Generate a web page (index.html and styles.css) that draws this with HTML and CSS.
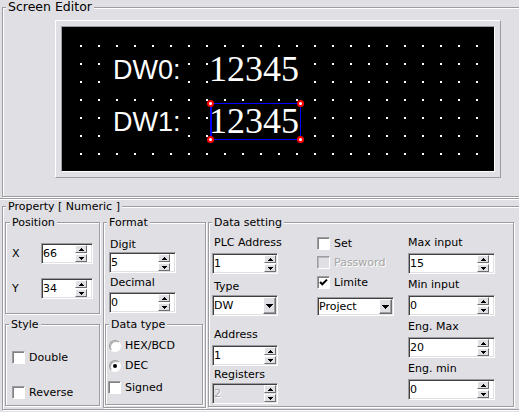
FILE: index.html
```html
<!DOCTYPE html>
<html>
<head>
<meta charset="utf-8">
<title>Screen Editor</title>
<link rel="stylesheet" href="styles.css">
</head>
<body>
<div class="group screen">
  <span class="gtitle gt-lg">Screen Editor</span>
  <div class="lcd-frame">
    <div class="lcd-well">
      <div class="lcd">
        <svg class="dots" width="432" height="144" viewBox="0 0 432 144">
          <defs>
            <pattern id="dp" width="18" height="18" patternUnits="userSpaceOnUse">
              <rect width="2" height="2" fill="#fff"/>
            </pattern>
          </defs>
          <rect x="18" y="18" width="414" height="126" fill="url(#dp)"/>
        </svg>
        <span class="tag t0">DW0:</span>
        <span class="num n0">12345</span>
        <span class="tag t1">DW1:</span>
        <span class="num n1">12345</span>
        <div class="sel">
          <i class="hd h-tl"></i><i class="hd h-tr"></i><i class="hd h-bl"></i><i class="hd h-br"></i>
        </div>
      </div>
    </div>
  </div>
</div>
<div class="splitter"></div>
<div class="group prop">
  <span class="gtitle">Property [ Numeric ]</span>
  <div class="prop-body">
    <div class="col1">
      <div class="group pos">
        <span class="gtitle gt-pos">Position</span>
        <div class="xy-row">
          <span class="xy-lbl">X</span>
          <div class="spin w52"><span class="val">66</span><span class="sbtns"><i class="sb up"></i><i class="sb dn"></i></span></div>
        </div>
        <div class="xy-row mt14">
          <span class="xy-lbl">Y</span>
          <div class="spin w52"><span class="val">34</span><span class="sbtns"><i class="sb up"></i><i class="sb dn"></i></span></div>
        </div>
      </div>
      <div class="group style">
        <span class="gtitle">Style</span>
        <div class="opt"><span class="cb"></span><span>Double</span></div>
        <div class="opt mt22"><span class="cb"></span><span>Reverse</span></div>
      </div>
    </div>
    <div class="group format">
      <span class="gtitle">Format</span>
      <div class="lbl fl">Digit</div>
      <div class="spin w67 fsp mt1"><span class="val">5</span><span class="sbtns"><i class="sb up"></i><i class="sb dn"></i></span></div>
      <div class="lbl fl mt3">Decimal</div>
      <div class="spin w67 fsp mt3"><span class="val">0</span><span class="sbtns"><i class="sb up"></i><i class="sb dn"></i></span></div>
      <div class="group dtype">
        <span class="gtitle">Data type</span>
        <div class="opt"><span class="rb"></span><span>HEX/BCD</span></div>
        <div class="opt mt7"><span class="rb on"></span><span>DEC</span></div>
        <div class="opt mt9"><span class="cb"></span><span>Signed</span></div>
      </div>
    </div>
    <div class="group dataset">
      <span class="gtitle">Data setting</span>
      <div class="ds-body">
        <div class="ds-left">
          <div class="lbl dl">PLC Address</div>
          <div class="spin w66 flush mt4"><span class="val">1</span><span class="sbtns"><i class="sb up"></i><i class="sb dn"></i></span></div>
          <div class="lbl dl mt6">Type</div>
          <div class="combo w66 mt2"><span class="val">DW</span><span class="cbtn"><i class="darr"></i></span></div>
          <div class="lbl dl mt12">Address</div>
          <div class="spin w66 flush mt4"><span class="val">1</span><span class="sbtns"><i class="sb up"></i><i class="sb dn"></i></span></div>
          <div class="lbl dl mt2">Registers</div>
          <div class="spin w66 flush dis mt2"><span class="val">2</span><span class="sbtns"><i class="sb up"></i><i class="sb dn"></i></span></div>
        </div>
        <div class="ds-mid">
          <div class="opt"><span class="cb"></span><span>Set</span></div>
          <div class="opt dis mt6"><span class="cb off"></span><span>Password</span></div>
          <div class="opt mt7"><span class="cb"><svg width="11" height="11" viewBox="0 0 11 11"><polyline points="2,5 4.3,7.3 9,2.6" fill="none" stroke="#000" stroke-width="2"/></svg></span><span>Limite</span></div>
          <div class="combo w77 small mt8"><span class="val">Project</span><span class="cbtn"><i class="darr"></i></span></div>
        </div>
        <div class="ds-right">
          <div class="lbl">Max input</div>
          <div class="spin w87 mt4"><span class="val">15</span><span class="sbtns"><i class="sb up"></i><i class="sb dn"></i></span></div>
          <div class="lbl mt4">Min input</div>
          <div class="spin w87 mt4"><span class="val">0</span><span class="sbtns"><i class="sb up"></i><i class="sb dn"></i></span></div>
          <div class="lbl mt4">Eng. Max</div>
          <div class="spin w87 mt4"><span class="val">20</span><span class="sbtns"><i class="sb up"></i><i class="sb dn"></i></span></div>
          <div class="lbl mt4">Eng. min</div>
          <div class="spin w87 mt4"><span class="val">0</span><span class="sbtns"><i class="sb up"></i><i class="sb dn"></i></span></div>
        </div>
      </div>
    </div>
  </div>
</div>
</body>
</html>
```

FILE: styles.css
```css
* { box-sizing: border-box; }
html, body { margin: 0; overflow: hidden; }
body {
  width: 519px;
  height: 412px;
  background: #e0dfe3;
  font-family: "DejaVu Sans", "Noto Sans", sans-serif;
  font-size: 11px;
  line-height: 13px;
  color: #000;
}

/* group boxes */
.group {
  position: relative;
  border: 1px solid #9d9da1;
  box-shadow: inset 1px 1px #fff, 1px 1px #fff;
}
.gtitle {
  position: absolute;
  top: -7px;
  left: 3px;
  padding: 0 2px;
  background: #e0dfe3;
  white-space: nowrap;
}
.gt-lg { font-size: 12.5px; line-height: 14px; top: -8px; left: 3px; }
.gt-pos { left: 4px; }

/* screen editor */
.screen {
  margin: 7px 0 0 2px;
  width: 530px;
  height: 190px;
  padding: 12px 0 0 52px;
}
.lcd-frame {
  width: 446px;
  height: 158px;
  border: 1px solid;
  border-color: #fff #9d9da1 #9d9da1 #fff;
  padding: 5px;
}
.lcd-well {
  width: 434px;
  height: 146px;
  border: 1px solid;
  border-color: #9d9da1 #fff #fff #9d9da1;
}
.lcd {
  position: relative;
  width: 432px;
  height: 144px;
  background: #000;
  overflow: hidden;
}
.dots { display: block; }
.tag {
  position: absolute;
  left: 51px;
  font-family: "Liberation Sans", Arial, sans-serif;
  font-size: 27px;
  line-height: 37px;
  color: #fff;
  background: #000;
}
.t0 { top: 25px; }
.t1 { top: 77px; }
.num {
  position: absolute;
  left: 147px;
  font-family: "Liberation Serif", "DejaVu Serif", "Times New Roman", serif;
  font-size: 36px;
  line-height: 37px;
  color: #fff;
  background: #000;
}
.n0 { top: 24px; }
.n1 { top: 76px; }
.sel {
  position: absolute;
  left: 148px;
  top: 76px;
  width: 91px;
  height: 37px;
  border: 1px solid #0000ff;
  border-left-width: 2px;
}
.hd {
  position: absolute;
  width: 7px;
  height: 7px;
  border-radius: 50%;
  background: #fff;
  border: 2px solid #f00;
}
.h-tl { left: -5px; top: -4px; }
.h-tr { right: -4px; top: -4px; }
.h-bl { left: -5px; bottom: -4px; }
.h-br { right: -4px; bottom: -4px; }

.splitter {
  margin-top: 1px;
  width: 530px;
  height: 2px;
  border-top: 1px solid #9d9da1;
  border-bottom: 1px solid #fff;
}

/* property panel */
.prop {
  margin: 6px 0 0 2px;
  width: 530px;
  height: 204px;
  padding: 15px 0 0 2px;
}
.prop-body { display: flex; align-items: flex-start; }
.col1 { width: 95px; display: flex; flex-direction: column; }
.pos { height: 92px; padding: 20px 0 0 6px; }
.xy-row { display: flex; align-items: center; }
.xy-lbl { width: 29px; }
.style { margin-top: 10px; height: 82px; padding: 26px 0 0 6px; }
.format {
  margin-left: 3px;
  width: 103px;
  height: 186px;
  padding: 15px 0 0 1px;
}
.fl { padding-left: 5px; }
.fsp { margin-left: 4px; }
.dtype {
  margin-top: 11px;
  width: 98px;
  height: 81px;
  padding: 14px 0 0 2px;
}
.dtype .rb { margin-left: 1px; }
.dataset {
  margin-left: 2px;
  width: 306px;
  height: 185px;
}
.ds-body { display: flex; align-items: flex-start; padding: 13px 0 0 3px; }
.ds-left { width: 66px; }
.dl { padding-left: 2px; }
.ds-mid { margin-left: 39px; width: 78px; padding-top: 1px; }
.ds-right { margin-left: 13px; width: 87px; }

.lbl { white-space: nowrap; }

/* spacing helpers */
.mt1 { margin-top: 1px; }
.mt2 { margin-top: 2px; }
.mt3 { margin-top: 3px; }
.mt4 { margin-top: 4px; }
.mt6 { margin-top: 6px; }
.mt7 { margin-top: 7px; }
.mt8 { margin-top: 8px; }
.mt9 { margin-top: 9px; }
.mt12 { margin-top: 12px; }
.mt14 { margin-top: 14px; }
.mt22 { margin-top: 22px; }

/* spin edits */
.spin, .combo {
  display: flex;
  align-items: center;
  height: 21px;
  background: #fff;
  border: 1px solid;
  border-color: #9d9da1 #fff #fff #9d9da1;
  box-shadow: inset 1px 1px #404040, inset -1px -1px #e0dfe3;
  padding: 1px 5px 1px 1px;
}
.combo { padding-right: 1px; }
.spin.flush { padding-right: 1px; }
.spin.dis { background: #e0dfe3; }
.spin.dis .val { color: #a6a6a6; text-shadow: 1px 1px 0 #fff; }
.val { flex: 1; white-space: nowrap; }
.w52 { width: 52px; }
.w66 { width: 66px; }
.w67 { width: 67px; }
.w77 { width: 77px; }
.w87 { width: 87px; }
.combo.small { height: 19px; }

.sbtns {
  display: flex;
  flex-direction: column;
  justify-content: space-between;
  width: 12px;
  align-self: stretch;
}
.sb, .cbtn {
  display: flex;
  align-items: center;
  justify-content: center;
  background: #e0dfe3;
  border: 1px solid;
  border-color: #fff #6e6e6e #6e6e6e #fff;
}
.sb { height: 8px; }
.cbtn { width: 13px; align-self: stretch; box-shadow: inset -1px -1px #9d9da1; }
.up::before, .dn::before {
  content: "";
  display: block;
  width: 5px;
  height: 3px;
}
.up::before {
  background:
    linear-gradient(#000, #000) 2px 0 / 1px 1px no-repeat,
    linear-gradient(#000, #000) 1px 1px / 3px 1px no-repeat,
    linear-gradient(#000, #000) 0 2px / 5px 1px no-repeat;
}
.dn::before {
  background:
    linear-gradient(#000, #000) 0 0 / 5px 1px no-repeat,
    linear-gradient(#000, #000) 1px 1px / 3px 1px no-repeat,
    linear-gradient(#000, #000) 2px 2px / 1px 1px no-repeat;
}
.darr {
  display: block;
  width: 7px;
  height: 4px;
  background:
    linear-gradient(#000, #000) 0 0 / 7px 1px no-repeat,
    linear-gradient(#000, #000) 1px 1px / 5px 1px no-repeat,
    linear-gradient(#000, #000) 2px 2px / 3px 1px no-repeat,
    linear-gradient(#000, #000) 3px 3px / 1px 1px no-repeat;
}

/* checkboxes & radios */
.opt {
  display: flex;
  align-items: center;
  gap: 4px;
  height: 13px;
  white-space: nowrap;
}
.opt.dis { color: #a6a6a6; text-shadow: 1px 1px 0 #fff; }
.cb {
  flex: none;
  display: flex;
  align-items: center;
  justify-content: center;
  width: 13px;
  height: 13px;
  background: #fff;
  border: 1px solid;
  border-color: #9d9da1 #fff #fff #9d9da1;
  box-shadow: inset 1px 1px #808080;
}
.cb svg { display: block; }
.cb.off { background: #e0dfe3; box-shadow: inset 1px 1px #b8b8b8; }
.rb {
  flex: none;
  position: relative;
  width: 12px;
  height: 12px;
  border-radius: 50%;
  background: #fff;
  border: 1px solid;
  border-color: #9d9da1 #fff #fff #9d9da1;
  box-shadow: inset 1px 1px #b0b0b0;
}
.rb.on::after {
  content: "";
  position: absolute;
  left: 3px;
  top: 3px;
  width: 4px;
  height: 4px;
  border-radius: 50%;
  background: #000;
}
```
